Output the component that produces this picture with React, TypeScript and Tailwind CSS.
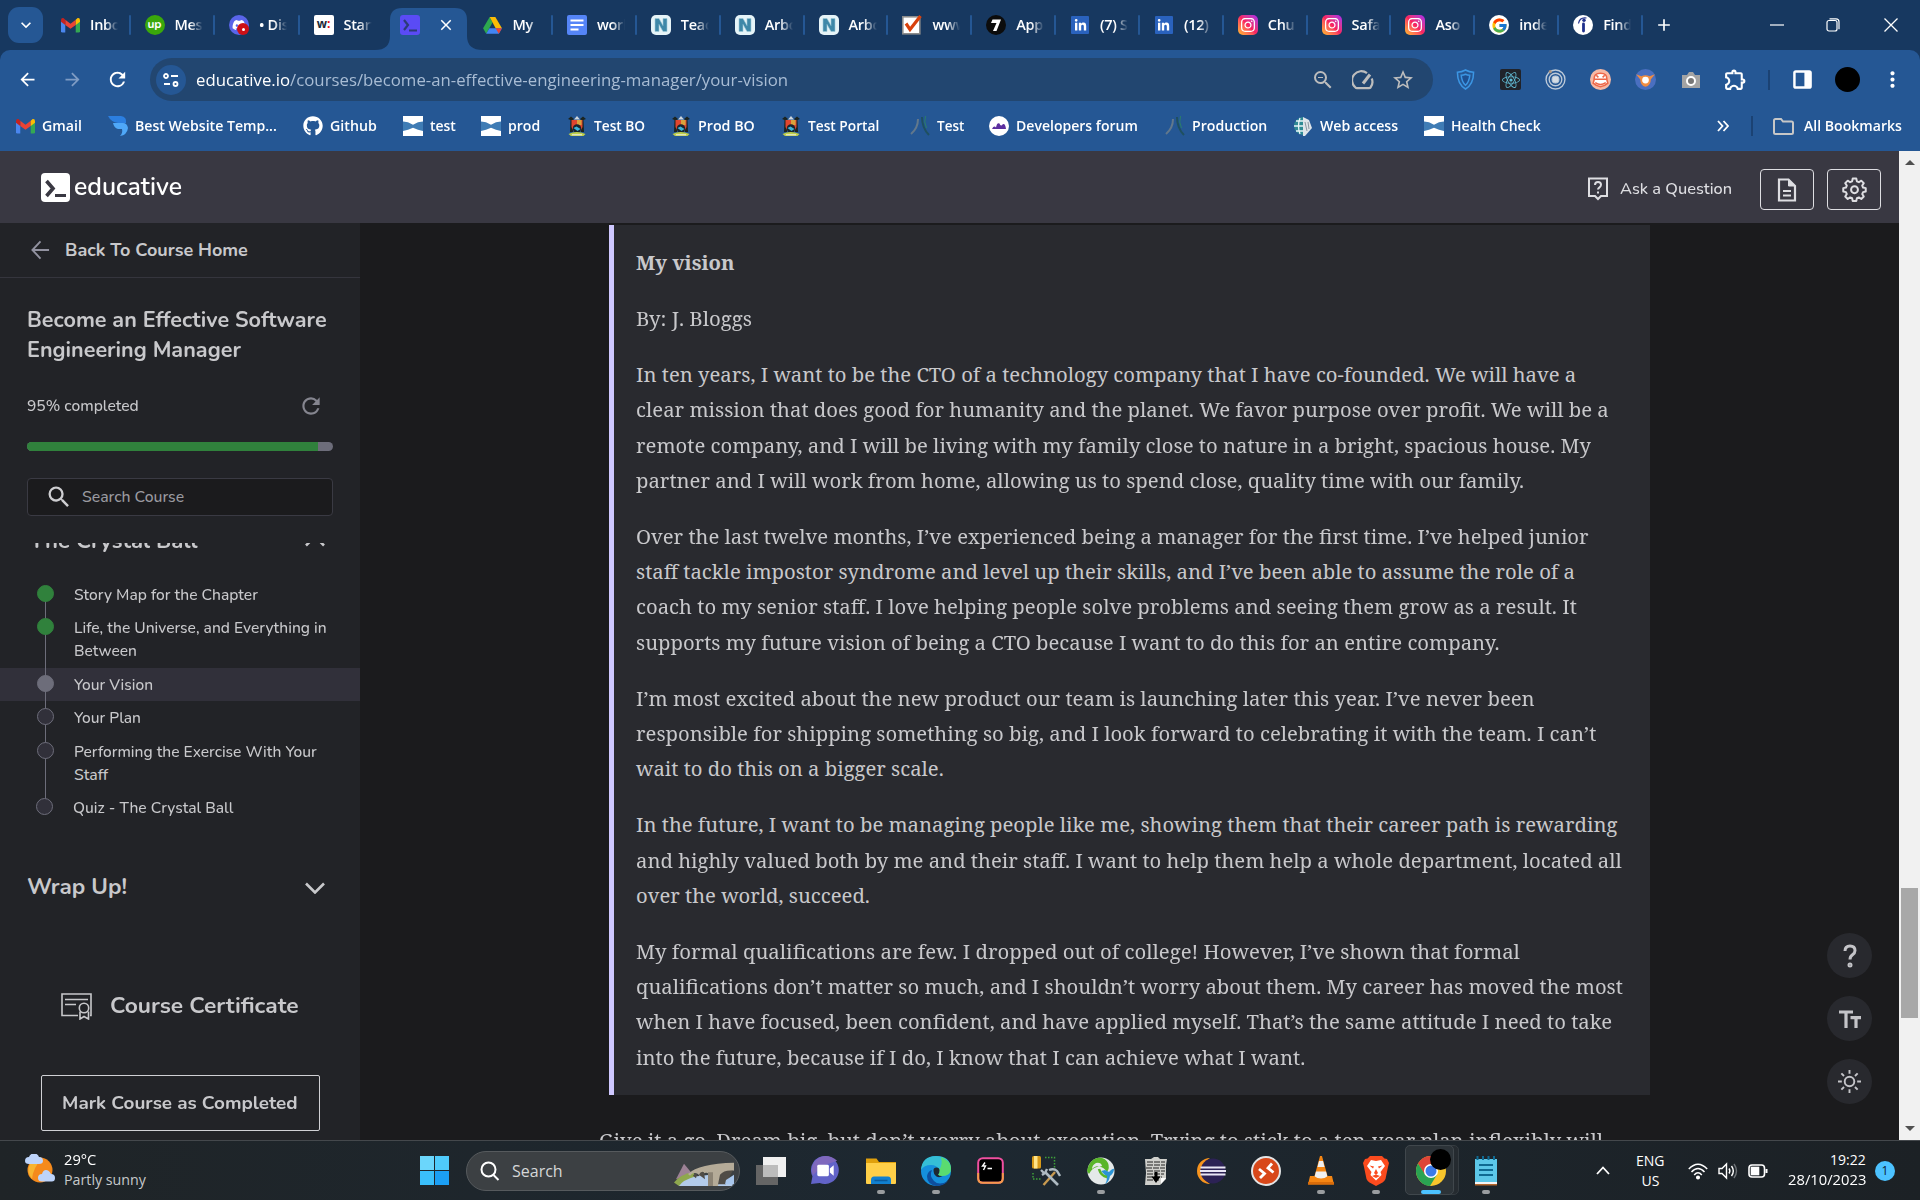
import React, { useLayoutEffect, useRef, useState } from "react";
import { FaInstagram, FaGithub, FaDiscord, FaLinkedinIn, FaReact } from "react-icons/fa";
import { FcGoogle } from "react-icons/fc";
import {
  MdArrowBack, MdArrowForward, MdRefresh, MdZoomOut, MdStarBorder, MdOutlineExtension,
  MdMoreVert, MdSearch, MdClose, MdAdd, MdKeyboardArrowDown,
} from "react-icons/md";

type Kids = { children?: React.ReactNode };

/* Single line of text squeezed or stretched to a fixed width. */
function Fit({ w, className = "", children }: { w: number; className?: string } & Kids) {
  const ref = useRef<HTMLSpanElement>(null);
  const [k, setK] = useState(1);
  useLayoutEffect(() => {
    if (ref.current && ref.current.offsetWidth) setK(w / ref.current.offsetWidth);
  }, [w]);
  return (
    <span className={"block shrink-0 whitespace-nowrap " + className} style={{ width: w }}>
      <span ref={ref} className="inline-block origin-left" style={{ transform: `scaleX(${k})` }}>{children}</span>
    </span>
  );
}

const Gmail = () => (
  <svg viewBox="0 0 20 16" className="h-4 w-[19px]">
    <path d="M0 3v11.500Q0 16 1.500 16H4.500V7z" fill="#4a86ee" />
    <path d="M20 3v11.500Q20 16 18.500 16H15.500V7z" fill="#34a853" />
    <path d="M4.500 2.500 10 6.700l5.500-4.200v5.500L10 12 4.500 8z" fill="#ea4335" />
    <path d="M0 3Q0 .2 2.500.7L4.500 2.500V8L0 4.700z" fill="#c5221f" />
    <path d="M20 3q0-2.800-2.500-2.300l-2 1.800V8L20 4.700z" fill="#fbbc04" />
  </svg>
);
const Upwork = () => (
  <span className="flex size-5 items-center justify-center rounded-full bg-[#3aa80b] pb-[3px] font-['Nunito',sans-serif] text-[12px] leading-none font-bold text-white">up</span>
);
const Discord = () => (
  <span className="relative flex size-5 items-center justify-center rounded-full bg-[#5a65ea]">
    <FaDiscord className="size-[14px] text-white" />
    <span className="absolute right-0 bottom-0 flex size-[12px] items-center justify-center rounded-full bg-[#cc1016]"><span className="size-[3px] rounded-full bg-white" /></span>
  </span>
);
const Wise = () => (
  <span className="flex size-5 items-center justify-center rounded-[2px] bg-white pb-[2px] font-['Open_Sans',sans-serif] text-[12px] leading-none font-bold text-[#1c2a38]">w<span className="text-red-600">:</span></span>
);
const EduTab = () => (
  <svg viewBox="0 0 20 20" className="size-5"><rect width="20" height="20" rx="3" fill="#5a4bf5" /><path d="M4 5l4 5-4 5M9 15.500h8" fill="none" stroke="#2b3b77" strokeWidth="2.200" /></svg>
);
const Drive = () => (
  <svg viewBox="0 0 20 18" className="h-[17px] w-[19px]">
    <path d="M7 0 0 12l3.300 5.700L10 5.800z" fill="#2da94f" /><path d="M7 0h6l7 12h-6.700z" fill="#fbbc04" /><path d="M3.300 17.700 6.700 12H20l-3.300 5.700z" fill="#4285f4" /><path d="M13.300 12H20l-3.300 5.700z" fill="#ea4335" />
  </svg>
);
const Docs = () => (
  <svg viewBox="0 0 20 20" className="size-5"><rect width="20" height="20" rx="2" fill="#5585f7" /><path d="M3.500 5.500h13M3.500 10h13M3.500 14.500h8" stroke="#fff" strokeWidth="2" /></svg>
);
const NIcon = () => (
  <svg viewBox="0 0 20 20" className="size-5"><rect width="20" height="20" rx="5" fill="#e6f4f8" /><path d="M4 16.500v-13h4l4 7v-7h4v13h-4l-4-7v7z" fill="#3e88a8" stroke="#9fcbd9" strokeWidth=".6" /></svg>
);
const Check = () => (
  <svg viewBox="0 0 20 20" className="size-5"><rect x=".8" y="1.800" width="17" height="17" fill="#fff" stroke="#8c8c8c" strokeWidth="1.600" /><path d="M4 8.500l4 6L18.500 1" fill="none" stroke="#d8400c" strokeWidth="3.200" /></svg>
);
const Seven = () => (
  <svg viewBox="0 0 20 20" className="size-5"><circle cx="10" cy="10" r="10" fill="#0c0c0c" /><path d="M6.500 4.500h8.500l-4.500 11.500H7L10.500 8H5z" fill="#fff" /></svg>
);
const LinkedIn = () => <span className="flex size-[18px] items-center justify-center rounded-[1px] bg-[#2a62bd]"><FaLinkedinIn className="size-[13px] text-white" /></span>;
const Insta = () => <span className="flex size-5 items-center justify-center rounded-[5px] bg-linear-to-tr from-[#ffb818] via-[#f8205f] to-[#a818f0]"><FaInstagram className="size-[16px] text-white" /></span>;
const Google = () => <span className="flex size-5 items-center justify-center rounded-full bg-white"><FcGoogle className="size-[17px]" /></span>;
const Indeed = () => (
  <svg viewBox="0 0 20 20" className="size-5"><circle cx="10" cy="10" r="10" fill="#fff" /><path d="M10.500 9v7" stroke="#20308c" strokeWidth="2.800" strokeLinecap="round" /><circle cx="11" cy="5.200" r="1.700" fill="#20308c" /><path d="M5.500 8.500Q6.500 2 13.500 3" fill="none" stroke="#20308c" strokeWidth="1.200" /></svg>
);

const tabs: { icon: React.ReactNode; text: string; active?: boolean; sep?: boolean }[] = [
  { icon: <Gmail />, text: "Inbox", sep: true },
  { icon: <Upwork />, text: "Messa", sep: true },
  { icon: <Discord />, text: "• Disc", sep: true },
  { icon: <Wise />, text: "Start" },
  { icon: <EduTab />, text: "", active: true },
  { icon: <Drive />, text: "My", sep: true },
  { icon: <Docs />, text: "work", sep: true },
  { icon: <NIcon />, text: "Teac", sep: true },
  { icon: <NIcon />, text: "Arbo", sep: true },
  { icon: <NIcon />, text: "Arbo", sep: true },
  { icon: <Check />, text: "www", sep: true },
  { icon: <Seven />, text: "Appl", sep: true },
  { icon: <LinkedIn />, text: "(7) S", sep: true },
  { icon: <LinkedIn />, text: "(12)", sep: true },
  { icon: <Insta />, text: "Chu", sep: true },
  { icon: <Insta />, text: "Safa", sep: true },
  { icon: <Insta />, text: "Aso", sep: true },
  { icon: <Google />, text: "inde", sep: true },
  { icon: <Indeed />, text: "Find", sep: true },
];

function TabStrip() {
  return (
    <div className="flex h-[50px] w-full bg-[#173860] pl-2">
      <div className="mt-[7px] mr-[3px] flex h-9 w-[35px] shrink-0 items-center justify-center rounded-[11px] bg-[#255794] text-white"><MdKeyboardArrowDown className="size-5" /></div>
      {tabs.map((t, i) =>
        t.active ? (
          <div key={i} className="relative flex w-[84.500px] shrink-0 items-center">
            <svg viewBox="0 0 108 42" className="absolute top-2 -left-[9px] h-[42px] w-[108px]"><path d="M0 42q15 0 15-14V12Q15 0 27 0h53q12 0 12 12v16q0 14 16 14z" fill="#255794" /></svg>
            <span className="relative ml-[16px]"><EduTab /></span>
            <MdClose className="relative ml-[17px] size-[18px] text-white" />
          </div>
        ) : (
          <div key={i} className={"flex shrink-0 items-center pl-[14px] " + (i < 6 ? "w-[84.500px]" : "w-[83.850px]")}>
            <span className="flex w-5 shrink-0 justify-center">{t.icon}</span>
            <span className="ml-[9px] w-[29px] overflow-hidden mask-r-from-55% mask-r-to-100% pl-px font-['Open_Sans',sans-serif] text-[14.500px] leading-5 font-semibold tracking-[-0.300px] whitespace-nowrap text-white">{t.text}</span>
            {t.sep && <span className="ml-auto h-5 w-[2px] rounded bg-[#255794]" />}
          </div>
        ))}
      <div className="flex w-[42px] shrink-0 items-center justify-center text-white"><MdAdd className="size-[20px]" /></div>
      <div className="ml-auto flex items-center text-white">
        <svg viewBox="0 0 14 14" className="mr-[42px] size-[14px]"><path d="M0 7h14" stroke="currentColor" strokeWidth="1.200" /></svg>
        <svg viewBox="0 0 14 14" className="mr-[44px] size-[14px]" fill="none" stroke="currentColor" strokeWidth="1.200"><rect x="1" y="2.500" width="10" height="10.500" rx="2" /><path d="M3.500.8H10q3 0 3 3v7.500" /></svg>
        <svg viewBox="0 0 14 14" className="mr-[22px] size-[14px]"><path d="M.5.5l13 13M13.500.5l-13 13" stroke="currentColor" strokeWidth="1.300" /></svg>
      </div>
    </div>
  );
}

const Slot = ({ children, className = "" }: Kids & { className?: string }) => (
  <span className={"flex w-[45px] shrink-0 items-center justify-center " + className}>{children}</span>
);

function Toolbar() {
  return (
    <div className="bg-[#173860]">
      <div className="flex h-[59px] items-center rounded-t-[10px] bg-[#255794] pl-[5px] text-white">
        <Slot><MdArrowBack className="size-[21px]" /></Slot>
        <Slot className="text-[#7f9cc4]"><MdArrowForward className="size-[21px]" /></Slot>
        <Slot><MdRefresh className="size-[23px]" /></Slot>
        <div className="ml-[10px] flex h-[43px] w-[1283px] items-center rounded-full bg-[#224670] pl-[6px]">
          <span className="flex size-[30px] items-center justify-center rounded-full bg-[#255794]">
            <svg viewBox="0 0 16 14" className="h-[14px] w-4" fill="none" stroke="#fff" strokeWidth="1.800"><circle cx="3" cy="3" r="2" /><path d="M8 3h7M1 11h6" /><circle cx="12.500" cy="11" r="2" /></svg>
          </span>
          <Fit w={592} className="ml-[10px] h-6 font-['Open_Sans',sans-serif] text-[17px] leading-6 text-[#a8bcd4]"><span className="text-white">educative.io</span>/courses/become-an-effective-engineering-manager/your-vision</Fit>
          <span className="ml-auto flex items-center pr-[18px] text-[#bdbdbd]">
            <MdZoomOut className="mr-[17px] size-[24px]" />
            <svg viewBox="0 0 22 20" className="mr-[17px] h-[20px] w-[22px]" fill="none" stroke="currentColor" strokeWidth="2.200"><path d="M15 3.200A9 9 0 0 0 3.500 17.500q.5.700 1.500.700h12q1 0 1.500-.7a9 9 0 0 0 1.200-9" /><path d="M11 13.500L18 4.500" strokeWidth="3" /></svg>
            <MdStarBorder className="size-[24px]" />
          </span>
        </div>
        <div className="ml-[10px] flex">
          <Slot><svg viewBox="0 0 20 22" className="h-[23px] w-[19px]" fill="none" stroke="#3c96e4" strokeWidth="1.600"><path d="M10 1Q6 3.300 1.500 3.300 1.500 16 10 21 18.500 16 18.500 3.300 14 3.300 10 1z" /><path d="M10 5.500Q8 6.500 5.500 6.600 6 13.500 10 17 14 13.500 14.500 6.600 12 6.500 10 5.500z" fill="#1d4f91" /></svg></Slot>
          <Slot><span className="flex size-[21px] items-center justify-center rounded-[2px] bg-[#20232a]"><FaReact className="size-[18px] text-[#61bcd6]" /></span></Slot>
          <Slot><svg viewBox="0 0 20 20" className="size-[21px]" fill="none" stroke="#bcc9d8"><circle cx="10" cy="10" r="9" strokeWidth="1.300" /><circle cx="10" cy="10" r="6" strokeWidth="1.300" /><circle cx="10" cy="10" r="3.300" fill="#d4dce4" /><circle cx="5" cy="2.500" r="1.500" fill="#b09a86" stroke="none" /></svg></Slot>
          <Slot><svg viewBox="0 0 20 20" className="size-[21px]"><circle cx="10" cy="10" r="10" fill="#f7b9a5" /><path d="M4 10Q3.500 4 10 4t6 6l1 3.500Q10 20 3 13.500z" fill="#fff" stroke="#ee6748" strokeWidth="1.500" /><path d="M4.500 9.800h11M5 13q5 3.500 10 0M6 6l2 2m6-2l-2 2" stroke="#ee6748" strokeWidth="1.500" fill="none" /></svg></Slot>
          <Slot><svg viewBox="0 0 20 20" className="size-[21px]"><circle cx="10" cy="10" r="10" fill="#4a6fc0" /><path d="M1 5l5 2q4-2 8 0l5-2-4 5q0 6-5 7-5-1-5-7z" fill="#f08c42" /><circle cx="10" cy="10.500" r="3.200" fill="#fff" /></svg></Slot>
          <Slot><svg viewBox="0 0 20 20" className="size-[20px]"><path d="M1 5h5l2-3h4l2 3h5v13H1z" fill="#a3a3a3" /><circle cx="10" cy="11" r="4" fill="#777" stroke="#fff" strokeWidth="2" /></svg></Slot>
          <Slot><MdOutlineExtension className="size-[25px]" /></Slot>
        </div>
        <span className="ml-[10px] h-5 w-[1.500px] bg-[#1b4273]" />
        <svg viewBox="0 0 20 20" className="ml-[23px] size-[19px]"><rect x="1.500" y="1.500" width="17" height="17" rx="1.500" fill="none" stroke="#fff" strokeWidth="2.600" /><path d="M12 1h7v18h-7z" fill="#fff" /></svg>
        <span className="ml-[23px] size-[25px] rounded-full bg-black" />
        <MdMoreVert className="ml-[20px] size-[25px]" />
      </div>
    </div>
  );
}

const Template = () => <svg viewBox="0 0 20 20" className="size-5"><path d="M5 7h10q4 0 5 5-1 7-8 8 3-3 2-7H10Q6 12 5 7z" fill="#4fa8f8" /><path d="M0 0h13q6 1 5 7H10Q3 6 0 0z" fill="#2c7fe0" /></svg>;
const Bow = () => <svg viewBox="0 0 20 20" className="size-5"><path d="M0 0h20v20H0z" fill="#fff" /><path d="M0 5.500q5 0 10 3.200 5-3.200 10-3.200v9.500q-5-1-10-3.200Q5 14 0 15z" fill="#3f7cb5" /></svg>;
const Crest = () => (
  <svg viewBox="0 0 20 20" className="size-5"><path d="M1 3l3-2.500L7 3l-1.500 1L6 16H3L3.500 4zM19 3l-3-2.500L13 3l1.500 1L14 16h3L16.500 4z" fill="#1c2420" /><path d="M10 0l3 3.500H7z" fill="#cfd6dc" /><path d="M4.500 4h11v7q-1 4-5.500 5-4.500-1-5.500-5z" fill="#e0452f" /><path d="M10 4h4.500v5H10z" fill="#d8a23c" /><circle cx="10" cy="12.500" r="4.200" fill="#17242e" /><path d="M6.500 12l3-1.500 4 2.500-3 2z" fill="#3bb2d8" /><path d="M1.500 18q8-4 17 0l-2 2H4z" fill="#bfcf4a" /><path d="M5 18.300h10v1H5z" fill="#eee" /></svg>
);
const Curves = () => <svg viewBox="0 0 20 20" className="size-5" fill="none" strokeWidth="2"><path d="M8 3q0 9-7 15" stroke="#62788c" /><path d="M12 1q0 11 7 18" stroke="#1f5060" /><path d="M15.500 0q-2 6 1 12" stroke="#2a7f68" strokeWidth="1" /></svg>;
const Forum = () => <svg viewBox="0 0 20 20" className="size-5"><circle cx="10" cy="10" r="10" fill="#fff" /><path d="M3 13q2-4 4-1.500Q8 6 10.500 7.500q1 3 2.500 1.500 3-3 4 4z" fill="#5b2f9f" /></svg>;
const Web = () => <svg viewBox="0 0 20 20" className="size-5"><path d="M10 1a9 9 0 0 0 0 18z" fill="#2f8a94" /><path d="M1 10h9M3 5h7M3 15h7M7 2q-3 8 0 16" stroke="#e8f5f7" strokeWidth="1.300" fill="none" /><path d="M10 1l6 3 3 8-7 8h-2z" fill="#dfe5ea" /><path d="M12 6l2 9M15 6l1 7" stroke="#8a96a0" /></svg>;
const Cat = () => <FaGithub className="size-5 text-white" />;

const marks: [React.ReactNode, string, number, string][] = [
  [<Gmail />, "Gmail", 40, "w-[93px]"],
  [<Template />, "Best Website Temp...", 142, "w-[195px]"],
  [<Cat />, "Github", 47, "w-[100px]"],
  [<Bow />, "test", 26, "w-[78px]"],
  [<Bow />, "prod", 32, "w-[86px]"],
  [<Crest />, "Test BO", 51, "w-[104px]"],
  [<Crest />, "Prod BO", 57, "w-[110px]"],
  [<Crest />, "Test Portal", 71, "w-[129px]"],
  [<Curves />, "Test", 27, "w-[79px]"],
  [<Forum />, "Developers forum", 122, "w-[176px]"],
  [<Curves />, "Production", 75, "w-[128px]"],
  [<Web />, "Web access", 78, "w-[131px]"],
  [<Bow />, "Health Check", 90, "w-[140px]"],
];

function Bookmarks() {
  return (
    <div className="flex h-[42px] items-start bg-[#255794] pt-[7px] pl-[15px] font-['Open_Sans',sans-serif] text-[14.500px] leading-5 font-semibold text-white">
      {marks.map(([icon, text, w, box], i) => (
        <div key={i} className={"flex shrink-0 items-center " + box}>
          <span className="flex w-5 justify-center">{icon}</span>
          <Fit w={w} className="ml-[7px]">{text}</Fit>
        </div>
      ))}
      <div className="ml-auto flex items-center">
        <svg viewBox="0 0 12 12" className="mr-[22px] size-[12px]" fill="none" stroke="#fff" strokeWidth="1.800"><path d="M1 1l4.500 5L1 11M6.500 1L11 6l-4.500 5" /></svg>
        <span className="mr-[20px] h-5 w-[2px] bg-[#1b4273]" />
        <svg viewBox="0 0 21 17" className="mr-[10px] h-[17px] w-[21px]" fill="none" stroke="#c7c7c7" strokeWidth="2"><path d="M1 2.500Q1 1 2.500 1H8l2 2.500h8.500q1.500 0 1.500 1.500v9.500q0 1.500-1.500 1.500h-16Q1 16 1 14.500z" /></svg>
        <Fit w={98} className="mr-[18px]">All Bookmarks</Fit>
      </div>
    </div>
  );
}

function Header() {
  return (
    <div className="flex h-[72px] shrink-0 items-center bg-[#393842] pr-[18px] pl-[41px] text-[#dedee2]">
      <svg viewBox="0 0 29 29" className="size-[29px]"><rect width="29" height="29" rx="4" fill="#fff" /><path d="M5.500 8l6.500 7.500L5.500 23" fill="none" stroke="#393842" strokeWidth="3.600" /><path d="M14 22.500h11" stroke="#393842" strokeWidth="3" /></svg>
      <Fit w={108} className="ml-1 text-[25px] leading-8 font-semibold text-white">educative</Fit>
      <svg viewBox="0 0 22 24" className="mt-[3px] ml-auto h-6 w-[22px]" fill="none" stroke="currentColor" strokeWidth="2"><path d="M2 1.500h18v17.500h-6l-3 3-3-3H2z" /><path d="M8 8q0-3 3-3t3 2.800q0 1.500-1.500 2.500T11 12.500" /><path d="M11 14.500v2" /></svg>
      <Fit w={112} className="ml-[11px] pt-1 text-[16.500px] leading-6 font-medium">Ask a Question</Fit>
      <span className="mt-1 ml-7 flex h-[41px] w-[54px] items-center justify-center rounded border border-[#dedee2]">
        <svg viewBox="0 0 20 24" className="mt-[2px] h-6 w-5" fill="none" stroke="currentColor" strokeWidth="2.200"><path d="M2 1.500h9.500L18 8v14.500H2z" /><path d="M11.500 1.500V8H18" fill="currentColor" strokeWidth="1" /><path d="M6 13h8M6 17.500h8" /></svg>
      </span>
      <span className="mt-1 ml-[13px] flex h-[41px] w-[54px] items-center justify-center rounded border border-[#dedee2]">
        <svg viewBox="0 0 24 24" className="size-[25px]" fill="none" stroke="currentColor" strokeWidth="1.900" strokeLinejoin="round"><path d="M10.300 1.500h3.400l.6 2.700 1.900.8 2.300-1.500 2.400 2.400L19.400 8.200l.8 1.900 2.600.6v3.200l-2.600.6-.8 1.900 1.500 2.300-2.400 2.400-2.300-1.500-1.900.8-.6 2.600h-3.400l-.6-2.600-1.900-.8-2.300 1.500-2.400-2.400 1.500-2.300-.8-1.900-2.600-.6v-3.200l2.600-.6.8-1.900-1.500-2.300 2.400-2.400L7.800 5l1.900-.8z" /><circle cx="12" cy="12.200" r="3.300" /></svg>
      </span>
    </div>
  );
}

const Dot = ({ c, last }: { c: string; last?: boolean }) => (
  <span className="relative flex w-[17px] shrink-0 self-stretch">
    {!last && <span className="absolute top-[10px] -bottom-[10px] left-2 w-px bg-[#6d6d7a]" />}
    <span className={"relative mt-[7px] size-[17px] rounded-full border border-[#6d6d7a] " + c} />
  </span>
);

const lessons: { lines: [string, number][]; dot: string; box: string; last?: boolean }[] = [
  { lines: [["Story Map for the Chapter", 184]], dot: "bg-[#30813c] border-[#30813c]!", box: "h-[33px]" },
  { lines: [["Life, the Universe, and Everything in", 253], ["Between", 63]], dot: "bg-[#30813c] border-[#30813c]!", box: "h-[57px]" },
  { lines: [["Your Vision", 79]], dot: "bg-[#6d6d7a]", box: "h-[33px] bg-[#31303a]" },
  { lines: [["Your Plan", 67]], dot: "bg-[#31303a]", box: "h-[34px]" },
  { lines: [["Performing the Exercise With Your", 243], ["Staff", 34]], dot: "bg-[#31303a]", box: "h-[56px]" },
  { lines: [["Quiz - The Crystal Ball", 160]], dot: "bg-[#31303a]", box: "h-[33px] -ml-px", last: true },
];

function Sidebar() {
  return (
    <div className="flex w-[360px] shrink-0 flex-col overflow-hidden bg-[#222327] text-[#c8c8cb]">
      <div className="flex h-[55px] shrink-0 items-center border-b border-[#35353d] pl-[31px]">
        <svg viewBox="0 0 20 20" className="h-5 w-[19px]" fill="none" stroke="#9292a0" strokeWidth="2"><path d="M19 10H2M10 1L1.500 10l8.500 9" /></svg>
        <Fit w={183} className="ml-[15px] text-[18px] leading-6 font-bold">Back To Course Home</Fit>
      </div>
      <div className="flex h-[265px] shrink-0 flex-col px-[27px] pt-[27px]">
        <Fit w={300} className="h-[30px] text-[22px] leading-[30px] font-bold">Become an Effective Software</Fit>
        <Fit w={214} className="h-[30px] text-[22px] leading-[30px] font-bold">Engineering Manager</Fit>
        <div className="mt-[28px] flex h-[26px] items-center justify-between pr-[9px]">
          <Fit w={112} className="text-[15.750px] leading-6 font-medium">95% completed</Fit>
          <MdRefresh className="size-[26px] text-[#85858f]" />
        </div>
        <div className="mt-[23px] h-[9px] shrink-0 overflow-hidden rounded-full bg-[#6d6d7a]"><div className="h-full w-[95%] bg-[#30813c]" /></div>
        <div className="mt-[27px] flex h-[38px] shrink-0 items-center rounded-[4px] border border-[#3a3a43] bg-[#1b1b1d] pl-[17px]">
          <MdSearch className="size-[28px] text-[#cfcfd2]" />
          <Fit w={102} className="ml-[9px] text-[15.750px] leading-6 font-medium text-[#9a9aa0]">Search Course</Fit>
        </div>
      </div>
      <div className="flex min-h-0 flex-1 flex-col overflow-hidden">
        <div className="-mt-[14px] flex h-6 shrink-0 items-center pr-[35px] pl-[30px]">
          <Fit w={168} className="text-[22px] leading-6 font-bold">The Crystal Ball</Fit>
          <svg viewBox="0 0 20 12" className="-mt-[1px] ml-auto h-3 w-5" fill="none" stroke="currentColor" strokeWidth="2.600"><path d="M1 10.500l9-9 9 9" /></svg>
        </div>
        <div className="mt-[25px] flex shrink-0 flex-col">
          {lessons.map((l, i) => (
            <div key={i} className={"flex shrink-0 pl-[37px] " + l.box}>
              <Dot c={l.dot} last={l.last} />
              <div className="ml-5 flex flex-col pt-[6px]">
                {l.lines.map(([t, w]) => <Fit key={t} w={w} className="h-[23px] text-[15.750px] leading-[22px] font-medium">{t}</Fit>)}
              </div>
            </div>
          ))}
        </div>
        <div className="mt-[47px] flex h-8 shrink-0 items-center pr-[35px] pl-[27px]">
          <Fit w={100} className="text-[22.500px] leading-8 font-bold">Wrap Up!</Fit>
          <svg viewBox="0 0 20 12" className="mt-[2px] ml-auto h-3 w-5" fill="none" stroke="currentColor" strokeWidth="2.600"><path d="M1 1.500l9 9 9-9" /></svg>
        </div>
        <div className="mt-[87px] flex h-8 shrink-0 items-center pl-[61px]">
          <svg viewBox="0 0 31 27" className="h-[27px] w-[31px] shrink-0" fill="none" stroke="currentColor" strokeWidth="1.600"><path d="M17 22.500H1V1h29v21.500h-1M4 6.500h23M4 11.500h11" /><circle cx="23" cy="15" r="4.700" /><path d="M19 18.500V26l4-2.500 4.500 2.500v-7.500" /></svg>
          <Fit w={189} className="ml-[18px] text-[22.500px] leading-8 font-bold">Course Certificate</Fit>
        </div>
        <div className="mt-[53px] ml-[41px] flex h-[56px] w-[279px] shrink-0 items-center justify-center rounded-[2px] border border-[#d0d0d4]">
          <Fit w={236} className="-ml-px text-[18px] leading-6 font-bold">Mark Course as Completed</Fit>
        </div>
      </div>
    </div>
  );
}

const story: [string, number][][] = [
  [["By: J. Bloggs", 116]],
  [
    ["In ten years, I want to be the CTO of a technology company that I have co-founded. We will have a", 940],
    ["clear mission that does good for humanity and the planet. We favor purpose over profit. We will be a", 973],
    ["remote company, and I will be living with my family close to nature in a bright, spacious house. My", 955],
    ["partner and I will work from home, allowing us to spend close, quality time with our family.", 888],
  ],
  [
    ["Over the last twelve months, I’ve experienced being a manager for the first time. I’ve helped junior", 953],
    ["staff tackle impostor syndrome and level up their skills, and I’ve been able to assume the role of a", 939],
    ["coach to my senior staff. I love helping people solve problems and seeing them grow as a result. It", 941],
    ["supports my future vision of being a CTO because I want to do this for an entire company.", 863],
  ],
  [
    ["I’m most excited about the new product our team is launching later this year. I’ve never been", 899],
    ["responsible for shipping something so big, and I look forward to celebrating it with the team. I can’t", 960],
    ["wait to do this on a bigger scale.", 308],
  ],
  [
    ["In the future, I want to be managing people like me, showing them that their career path is rewarding", 981],
    ["and highly valued both by me and their staff. I want to help them help a whole department, located all", 986],
    ["over the world, succeed.", 234],
  ],
  [
    ["My formal qualifications are few. I dropped out of college! However, I’ve shown that formal", 884],
    ["qualifications don’t matter so much, and I shouldn’t worry about them. My career has moved the most", 987],
    ["when I have focused, been confident, and have applied myself. That’s the same attitude I need to take", 976],
    ["into the future, because if I do, I know that I can achieve what I want.", 669],
  ],
];

function Article() {
  return (
    <div className="relative flex min-w-0 flex-1 flex-col overflow-hidden bg-[#1b1b1d] pt-[2px] font-['Noto_Serif','DejaVu_Serif_Condensed','DejaVu_Serif',serif] text-[20.250px] text-[#c8c8cb]">
      <div className="ml-[249px] flex h-[870px] w-[1041px] shrink-0 flex-col gap-[20.700px] border-l-[5px] border-[#cfc8ff] bg-[#292a2f] pt-[20px] pl-[22px]">
        <Fit w={98} className="h-[35.300px] leading-[35.300px] font-bold">My vision</Fit>
        {story.map((p, i) => (
          <div key={i} className="flex flex-col">
            {p.map(([t, w]) => <Fit key={t} w={w} className="h-[35.300px] leading-[35.300px]">{t}</Fit>)}
          </div>
        ))}
      </div>
      <Fit w={1004} className="mt-[28px] ml-[239px] h-[35.300px] leading-[35.300px]">Give it a go. Dream big, but don’t worry about execution. Trying to stick to a ten-year plan inflexibly will</Fit>
      <div className="absolute top-[710px] right-[27px] flex flex-col gap-[18px] text-[#c4c4c8]">
        <span className="flex size-[45px] items-center justify-center rounded-full bg-[#28292e]">
          <svg viewBox="0 0 14 24" className="h-6 w-[14px]" fill="none" stroke="currentColor" strokeWidth="3"><path d="M2 7q0-5 5-5t5 4.500q0 2.500-2.500 4.300T7 15.500" /><circle cx="7" cy="21" r="1" /></svg>
        </span>
        <span className="flex size-[45px] items-center justify-center rounded-full bg-[#28292e]">
          <svg viewBox="0 0 22 18" className="h-[18px] w-[22px]" fill="none" stroke="currentColor" strokeWidth="3.200"><path d="M0 2h14M7 2v16M11.500 7.600H22M17 7.600V18" /></svg>
        </span>
        <span className="flex size-[45px] items-center justify-center rounded-full bg-[#28292e]">
          <svg viewBox="0 0 24 24" className="size-[23px]" fill="none" stroke="currentColor" strokeWidth="2"><circle cx="12" cy="12" r="5" /><path d="M12 0v4M12 20v4M0 12h4M20 12h4M3.500 3.500l2.800 2.800M17.700 17.700l2.800 2.800M3.500 20.500l2.800-2.800M17.700 6.300l2.800-2.800" /></svg>
        </span>
      </div>
    </div>
  );
}

const TaskIcon = ({ children, run }: Kids & { run?: boolean }) => (
  <span className="relative flex w-[55px] shrink-0 items-center justify-center">
    {children}
    {run && <span className="absolute bottom-[6px] h-1 w-2 rounded-full bg-[#9a9da0]" />}
  </span>
);

function Taskbar() {
  return (
    <div className="flex h-[60px] shrink-0 overflow-hidden border-t border-[#44484c] bg-linear-to-r from-[#1f2427] via-[#1d2831] to-[#1c2125] font-['Open_Sans',sans-serif] text-white">
      <div className="flex w-[420px] shrink-0 items-center pl-[25px]">
        <svg viewBox="0 0 30 30" className="mb-1 size-[30px]"><circle cx="15" cy="16" r="12.500" fill="#f58a1c" /><path d="M7 25Q1 18 5 10t12-6Q8 14 7 25z" fill="#f8b531" /><path d="M0 7q0-4 4-4 1-3.500 5-3.500T14 3q4 0 4 4 0 3-4 3H4Q0 10 0 7zM13 24q0-4 4-4 1-4 4-4t5 4q4 0 4 4t-4 3.500h-9Q13 27.500 13 24z" fill="#bdd4fb" /></svg>
        <div className="-mt-[2px] ml-[9px] flex flex-col text-[14.250px] leading-5">
          <Fit w={32}>29°C</Fit>
          <Fit w={82} className="text-[#c6c9cb]">Partly sunny</Fit>
        </div>
      </div>
      <div className="flex items-center">
        <div className="grid size-[29px] grid-cols-2 gap-px">
          <span className="bg-[#6bd6fb]" /><span className="bg-[#4fcbfb]" /><span className="bg-[#3abffb]" /><span className="bg-[#1b9ff5]" />
        </div>
        <div className="ml-[17px] flex h-10 w-[274px] items-center overflow-hidden rounded-full border border-[#565a5d] bg-[#3c4043] pl-[13px]">
          <svg viewBox="0 0 20 20" className="size-5" fill="none" stroke="#fff" strokeWidth="2"><circle cx="8.500" cy="8.500" r="7" /><path d="M13.500 14l5 5" /></svg>
          <Fit w={51} className="ml-[12px] text-[16px] leading-6 text-[#d5d7d8]">Search</Fit>
          <svg viewBox="0 0 62 28" className="mt-[7px] mr-[4px] ml-auto h-[24px] w-[62px]" preserveAspectRatio="none">
            <path d="M3 20L11 2l9 13z" fill="#9c8195" />
            <path d="M1 24Q8 14 20 12l6 8-6 8H6z" fill="#8fa84e" />
            <path d="M6 28q4-7 16-11l22-3 18 14z" fill="#b3cbea" />
            <path d="M15 14Q26 2 61 1v9q-11 1-14 8l-2 10h-8V17q-2-7-7-3l-3 3-2-3q-5-3-8 2z" fill="#b5ab98" />
            <path d="M26 15q2-5 5-3l1 8zM20 16q2-4 4-1l-1 4zM47 15q4-6 13-5-4 8-7 16h-8z" fill="#504c46" />
            <path d="M35 12h5v16h-5z" fill="#8c8374" />
            <path d="M53 21l8-6v11h-9z" fill="#a8c6ec" />
          </svg>
        </div>
        <div className="ml-[3px] flex h-[59px]">
          <TaskIcon><svg viewBox="0 0 30 28" className="h-7 w-[30px]"><path d="M7 0h23v20H7z" fill="#f0f0f0" /><path d="M0 8h22v20H0z" fill="#656565" /><path d="M7 8h15v12H7z" fill="#bcbcbc" /></svg></TaskIcon>
          <TaskIcon><svg viewBox="0 0 30 30" className="size-[29px]"><path d="M15 0a14.500 14.500 0 1 1-6 28L0 29l1.500-8A14.500 14.500 0 0 1 15 0z" fill="#6263c8" /><path d="M15 0a14.500 14.500 0 0 0-13 20l10-10L27 5q-5-5-12-5z" fill="#7f68bd" /><rect x="6.500" y="9" width="12" height="12" rx="1.500" fill="#fff" /><path d="M19.500 13l4-3.500v11l-4-3.500z" fill="#fff" /></svg></TaskIcon>
          <TaskIcon run><svg viewBox="0 0 30 28" className="h-7 w-[30px]"><path d="M0 1.500h10.500L13 5h17v8H0z" fill="#e0a00c" /><path d="M0 6h30v20q0 1-1 1H1q-1 0-1-1z" fill="#ffcf48" /><path d="M5 23q0-3.500 3-3.500h14q3 0 3 3.500v4H5z" fill="#1180d0" /><path d="M8.500 23.500h13" stroke="#0b5a9c" strokeWidth="1.500" /></svg></TaskIcon>
          <TaskIcon run><svg viewBox="0 0 30 30" className="size-[30px]"><circle cx="15" cy="15" r="15" fill="#1590dc" /><path d="M0 14Q1 0 15 0q14 0 15 12 0 8-9 8-4 0-4-2 2-1 1-4-2-5-8-5Q3 9 0 14z" fill="#35bfd6" /><path d="M20 1q10 4 10 11.500 0 7.500-9 7.500-4 0-4-2 2-1 1-4 4-5 2-13z" fill="#5adb70" /><path d="M11 14q-3 6 2 11t14 0q-4 5-12 5Q6 28 6 20q1-5 5-6z" fill="#0e4f9e" /><path d="M12.500 14q0-2.500 3-2.500t3 3-1.500 4q1 1.800 4.500 1.500-3 2-6 .500-3-2-3-6.500z" fill="#1d2831" /></svg></TaskIcon>
          <TaskIcon><svg viewBox="0 0 27 27" className="size-[27px]"><rect x="1.200" y="1.200" width="24.600" height="24.600" rx="4.500" fill="#000" stroke="#f04fa0" strokeWidth="2" /><path d="M1.200 16v5.300q0 4.500 4.500 4.500h15.600q4.500 0 4.500-4.500V16" fill="none" stroke="#f59a4a" strokeWidth="2" /><path d="M8 5.500L5.500 9h3L6.500 13M10.500 11.500h4.500" stroke="#fff" strokeWidth="1.400" fill="none" /></svg></TaskIcon>
          <TaskIcon><svg viewBox="0 0 30 30" className="size-[30px]"><rect x="1" width="9" height="12.500" rx="1.500" fill="#d89a18" /><rect x="3" width="3.500" height="12.500" fill="#ffe488" /><path d="M14 1.500h9.500V12M2 17v6h9" fill="none" stroke="#3fa03a" strokeWidth="1.500" strokeDasharray="1.500 1.500" /><path d="M24 16L12.500 29" stroke="#c89a50" strokeWidth="2.400" /><path d="M14 16l13 13" stroke="#aebac2" strokeWidth="2.600" /><path d="M10 14l3 3M16 13l-2 4-3 2M18 14q5-2 8 1l3 5" stroke="#aebac2" strokeWidth="2.400" fill="none" /></svg></TaskIcon>
          <TaskIcon run><svg viewBox="0 0 28 28" className="size-7"><circle cx="14" cy="14" r="13.500" fill="#e4e9e9" /><path d="M0 14Q2 3 10 1q8-1 11 5 2 5-1 9-4-6-10-5-5 1-8 7z" fill="#59b52a" /><path d="M9 6q5-1 6 3l-3 1q-3-2-7 2 0-4 4-6z" fill="#e4e9e9" /><path d="M18 27q3-4 1-8l-5-5 4-1 4 2q4-4 5-3 0 4-4 7-1 6-5 8z" fill="#2a94d6" /><path d="M12 12q2 7 8 8" stroke="#59b52a" strokeWidth="2.600" fill="none" /></svg></TaskIcon>
          <TaskIcon><svg viewBox="0 0 24 28" className="h-7 w-6"><path d="M1 2h6l3-2h4l2 2h7l-1 6v14l-6 6H1l1-12z" fill="#d0d0cc" /><path d="M3 5h18M3 8h18M2 11h19M3 14h18M3 17h17M3 20h15M3 23h12" stroke="#222" strokeWidth="1.200" strokeDasharray="6 1" /><path d="M12 15v6" stroke="#000" strokeWidth="3" /><path d="M7.500 19.500h9L12 26z" fill="#000" /><path d="M17 27v-6h5z" fill="#fff" /></svg></TaskIcon>
          <TaskIcon><svg viewBox="0 0 30 28" className="h-7 w-[30px]"><path d="M14 1A13 13 0 0 0 14 27Q6 22 6 14T14 1z" fill="#f7941e" /><circle cx="17" cy="14" r="12.500" fill="#2c2255" /><path d="M4.500 10.500h25M4 14h26M4.500 17.500h25" stroke="#e9e6f5" strokeWidth="2" /></svg></TaskIcon>
          <TaskIcon><svg viewBox="0 0 30 30" className="size-[30px]"><circle cx="15" cy="15" r="14" fill="#d8481a" stroke="#e3e5e6" strokeWidth="2" /><path d="M8 13l5.500 4.500L9 22M21 7.500l-4 4.500 5.500 4.500" fill="none" stroke="#fff" strokeWidth="2.800" /></svg></TaskIcon>
          <TaskIcon run><svg viewBox="0 0 26 29" className="h-[29px] w-[26px]"><path d="M12 0h2l6 22H6z" fill="#f58613" /><path d="M11 5h4l1.500 6h-7zM8 15.500h10l2 7q-7 2-14 0z" fill="#f0f0f0" /><path d="M2 20h4q7 5 14 0h4l2 8.500H0z" fill="#f58613" /><path d="M0 26h26v2.500H0z" fill="#d96c0a" /></svg></TaskIcon>
          <TaskIcon run>
            <svg viewBox="0 0 26 30" className="h-[30px] w-[26px]">
              <path d="M7 0h12l2.500 2.500L24 3l2 4-1 4-2.500 12q-1 2-3 3.500L13 30l-6.500-3.500q-2-1.500-3-3.500L1 11 0 7l2-4 2.500-.5z" fill="#fb4b1e" />
              <path d="M8 4l5 1 5-1 4 6-4.500 6 1 3-5.500 5.500L7.500 19l1-3L4 10z" fill="#fff" />
              <path d="M6.500 9.500l4.500 1-1 2zM19.500 9.500l-4.500 1 1 2zM13 13l-2 4 2 2 2-2zM9 20l4-1.500 4 1.500-4 2z" fill="#fb4b1e" />
            </svg>
          </TaskIcon>
          <span className="relative flex w-[55px] shrink-0 items-center justify-center">
            <span className="absolute top-[4px] left-[8px] h-[50px] w-[48px] rounded-[5px] border border-[#343b40] bg-[#252b30]" />
            <span className="absolute top-[4px] left-[2px] h-[50px] w-[49px] rounded-[5px] border border-[#40474c] bg-[#2c3338]" />
            <svg viewBox="0 0 30 30" className="relative size-[30px]"><circle cx="15" cy="15" r="15" fill="#f9c62c" /><path d="M2 7.500A15 15 0 0 1 28 7.500H15l-6.500 11z" fill="#de4437" /><path d="M2 7.500A15 15 0 0 0 14 30l7-11.500H9z" fill="#2aa352" /><circle cx="15" cy="15" r="7" fill="#fff" /><circle cx="15" cy="15" r="5.500" fill="#3b7bea" /></svg>
            <span className="absolute top-[8px] left-[27px] size-[21px] rounded-full bg-black" />
            <span className="absolute bottom-[6px] h-1 w-5 rounded-full bg-[#4cc2ff]" />
          </span>
          <TaskIcon run><svg viewBox="0 0 22 30" className="h-[30px] w-[22px]"><path d="M0 3h22v24H0z" fill="#5cc7e8" /><path d="M0 26h22v2H0z" fill="#f4f4f4" /><path d="M0 28h22v1.500H0z" fill="#b5672c" /><path d="M2.500 0v4M8 0v4M13.500 0v4M19 0v4M4 9h14M4 14h14M4 19h14" stroke="#0f6a92" strokeWidth="2" /></svg></TaskIcon>
        </div>
      </div>
      <div className="ml-auto flex items-center">
        <svg viewBox="0 0 14 9" className="h-[9px] w-[14px]" fill="none" stroke="#fff" strokeWidth="1.800"><path d="M1 8l6-6.500L13 8" /></svg>
        <div className="ml-[26px] flex w-[29px] flex-col items-center text-[14px] leading-5"><Fit w={29}>ENG</Fit><Fit w={18}>US</Fit></div>
        <svg viewBox="0 0 20 18" className="ml-[23px] h-[18px] w-5" fill="none" stroke="#fff" strokeWidth="1.500"><path d="M.8 7q9.200-9.500 18.400 0M3.500 10q6.500-7 13 0M6.200 13q3.800-4.300 7.600 0" /><circle cx="10" cy="15.500" r="1.300" fill="#fff" /></svg>
        <svg viewBox="0 0 20 18" className="ml-[10px] h-[18px] w-5" fill="none" stroke="#fff" strokeWidth="1.400"><path d="M1 6.500h3L8.500 2v14L4 11.500H1z" /><path d="M11 6.500q1.800 2.500 0 5M13.500 4q3.600 5 0 10" /><path d="M16 2q5 7 0 14" stroke="#6d7276" /></svg>
        <svg viewBox="0 0 20 14" className="ml-[10px] h-[14px] w-5" fill="none" stroke="#fff" strokeWidth="1.600"><rect x="1" y="1" width="15.500" height="12" rx="3" /><rect x="3.500" y="3.500" width="7" height="7" fill="#fff" /><path d="M18.500 5v4" strokeWidth="2" /></svg>
        <div className="-mt-[2px] ml-5 flex w-[78px] flex-col items-end text-[14px] leading-5"><Fit w={36}>19:22</Fit><Fit w={78}>28/10/2023</Fit></div>
        <span className="mr-[25px] ml-[9px] flex size-5 items-center justify-center rounded-full bg-[#4cc2ff] text-[12px] leading-none text-[#0b2233]">1</span>
      </div>
    </div>
  );
}

export default function App() {
  return (
    <div className="flex h-[1200px] w-[1920px] flex-col overflow-hidden bg-[#1b1b1d] font-['Nunito','Nunito_Sans','Lato',sans-serif]">
      <TabStrip />
      <Toolbar />
      <Bookmarks />
      <div className="flex min-h-0 flex-1">
        <div className="flex w-[1899px] shrink-0 flex-col">
          <Header />
          <div className="flex min-h-0 flex-1">
            <Sidebar />
            <Article />
          </div>
        </div>
        <div className="flex flex-1 flex-col items-center bg-[#f1f1f1]">
          <span className="mt-[9px] size-0 border-x-[5px] border-b-[5px] border-x-transparent border-b-[#505050]" />
          <span className="mt-[723px] h-[130px] w-[17px] bg-[#a8a8a8]" />
          <span className="mt-[108px] size-0 border-x-[5px] border-t-[5px] border-x-transparent border-t-[#505050]" />
        </div>
      </div>
      <Taskbar />
    </div>
  );
}
